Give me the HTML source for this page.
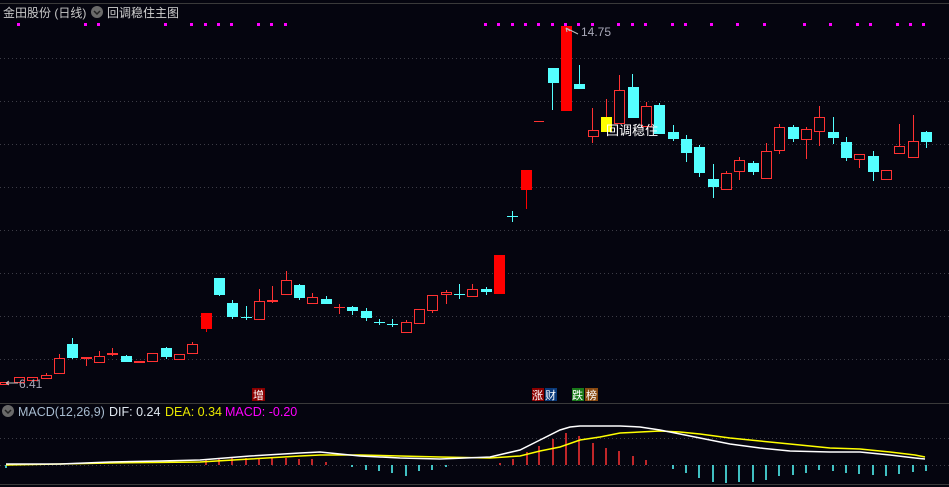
<!DOCTYPE html>
<html><head><meta charset="utf-8"><style>
html,body{margin:0;padding:0;background:#05050f;}
svg{display:block;font-family:"Liberation Sans","Noto Sans CJK SC",sans-serif;}
</style></head><body>
<svg width="949" height="487" viewBox="0 0 949 487" xmlns="http://www.w3.org/2000/svg">
<rect width="949" height="487" fill="#05050f"/>
<line x1="0" y1="3.5" x2="949" y2="3.5" stroke="#3a3a3a"/>
<g stroke="#3c3c46" stroke-dasharray="1 3">
<line x1="0" y1="58.5" x2="949" y2="58.5"/><line x1="0" y1="101.5" x2="949" y2="101.5"/>
<line x1="0" y1="144.5" x2="949" y2="144.5"/><line x1="0" y1="187.5" x2="949" y2="187.5"/>
<line x1="0" y1="230.5" x2="949" y2="230.5"/><line x1="0" y1="273.5" x2="949" y2="273.5"/>
<line x1="0" y1="316.5" x2="949" y2="316.5"/><line x1="0" y1="359.5" x2="949" y2="359.5"/>
<line x1="0" y1="438.5" x2="949" y2="438.5"/><line x1="0" y1="465.5" x2="949" y2="465.5"/>
</g>
<line x1="0" y1="403.5" x2="949" y2="403.5" stroke="#3a3a3a"/>
<line x1="0" y1="484.5" x2="949" y2="484.5" stroke="#3a3a3a"/>
<text x="3" y="17" fill="#c8c8c8" font-size="12">金田股份 (日线)</text>
<circle cx="97" cy="12" r="6" fill="#6a6a6a"/><path d="M94 11l3 3 3-3" stroke="#222" stroke-width="1.5" fill="none"/>
<text x="107" y="17" fill="#d0d0d0" font-size="12">回调稳住主图</text>
<g fill="#ff00ff">
<rect x="17" y="23" width="3" height="3"/><rect x="84" y="23" width="3" height="3"/><rect x="97" y="23" width="3" height="3"/><rect x="164" y="23" width="3" height="3"/><rect x="190" y="23" width="3" height="3"/><rect x="204" y="23" width="3" height="3"/><rect x="217" y="23" width="3" height="3"/><rect x="230" y="23" width="3" height="3"/><rect x="257" y="23" width="3" height="3"/><rect x="270" y="23" width="3" height="3"/><rect x="284" y="23" width="3" height="3"/>
<rect x="484" y="23" width="3" height="3"/><rect x="497" y="23" width="3" height="3"/><rect x="511" y="23" width="3" height="3"/><rect x="524" y="23" width="3" height="3"/><rect x="537" y="23" width="3" height="3"/><rect x="551" y="23" width="3" height="3"/><rect x="564" y="23" width="3" height="3"/><rect x="577" y="23" width="3" height="3"/><rect x="591" y="23" width="3" height="3"/><rect x="617" y="23" width="3" height="3"/><rect x="631" y="23" width="3" height="3"/><rect x="644" y="23" width="3" height="3"/><rect x="671" y="23" width="3" height="3"/><rect x="684" y="23" width="3" height="3"/>
<rect x="710" y="23" width="3" height="3"/><rect x="736" y="23" width="3" height="3"/><rect x="763" y="23" width="3" height="3"/><rect x="803" y="23" width="3" height="3"/><rect x="829" y="23" width="3" height="3"/><rect x="856" y="23" width="3" height="3"/><rect x="869" y="23" width="3" height="3"/><rect x="896" y="23" width="3" height="3"/><rect x="909" y="23" width="3" height="3"/><rect x="922" y="23" width="3" height="3"/>
</g>
<g stroke-width="1">
<line x1="4.5" y1="382" x2="4.5" y2="384" stroke="#ff3232"/><rect x="0.5" y="382.5" width="8" height="2" fill="#05050f" stroke="#ff3232"/>
<rect x="14.5" y="377.5" width="10" height="5" fill="#05050f" stroke="#ff3232"/>
<rect x="27.5" y="377.5" width="10" height="3" fill="#05050f" stroke="#ff3232"/>
<line x1="46.5" y1="373" x2="46.5" y2="379" stroke="#ff3232"/><rect x="41.5" y="375.5" width="10" height="3" fill="#05050f" stroke="#ff3232"/>
<line x1="59.5" y1="354" x2="59.5" y2="373" stroke="#ff3232"/><rect x="54.5" y="358.5" width="10" height="15" fill="#05050f" stroke="#ff3232"/>
<line x1="72.5" y1="338" x2="72.5" y2="359" stroke="#54ffff"/><rect x="67" y="344" width="11" height="14" fill="#54ffff"/>
<line x1="86.5" y1="357" x2="86.5" y2="366" stroke="#ff3232"/><rect x="81" y="357" width="11" height="2" fill="#ff3232"/>
<line x1="99.5" y1="351" x2="99.5" y2="363" stroke="#ff3232"/><rect x="94.5" y="356.5" width="10" height="6" fill="#05050f" stroke="#ff3232"/>
<line x1="112.5" y1="348" x2="112.5" y2="356" stroke="#ff3232"/><rect x="107" y="353" width="11" height="2" fill="#ff3232"/>
<line x1="126.5" y1="355" x2="126.5" y2="362" stroke="#54ffff"/><rect x="121" y="356" width="11" height="6" fill="#54ffff"/>
<rect x="134" y="361" width="11" height="2" fill="#ff3232"/>
<rect x="147.5" y="353.5" width="10" height="8" fill="#05050f" stroke="#ff3232"/>
<line x1="166.5" y1="347" x2="166.5" y2="359" stroke="#54ffff"/><rect x="161" y="348" width="11" height="9" fill="#54ffff"/>
<rect x="174.5" y="354.5" width="10" height="5" fill="#05050f" stroke="#ff3232"/>
<line x1="192.5" y1="342" x2="192.5" y2="354" stroke="#ff3232"/><rect x="187.5" y="344.5" width="10" height="9" fill="#05050f" stroke="#ff3232"/>
<line x1="206.5" y1="313" x2="206.5" y2="332" stroke="#ff0000"/><rect x="201" y="313" width="11" height="16" fill="#ff0000"/>
<line x1="219.5" y1="278" x2="219.5" y2="296" stroke="#54ffff"/><rect x="214" y="278" width="11" height="17" fill="#54ffff"/>
<line x1="232.5" y1="300" x2="232.5" y2="319" stroke="#54ffff"/><rect x="227" y="303" width="11" height="14" fill="#54ffff"/>
<line x1="246.5" y1="306" x2="246.5" y2="320" stroke="#54ffff"/><rect x="241" y="317" width="11" height="1" fill="#54ffff"/>
<line x1="259.5" y1="289" x2="259.5" y2="319" stroke="#ff3232"/><rect x="254.5" y="301.5" width="10" height="18" fill="#05050f" stroke="#ff3232"/>
<line x1="272.5" y1="286" x2="272.5" y2="303" stroke="#ff3232"/><rect x="267" y="300" width="11" height="2" fill="#ff3232"/>
<line x1="286.5" y1="271" x2="286.5" y2="294" stroke="#ff3232"/><rect x="281.5" y="280.5" width="10" height="14" fill="#05050f" stroke="#ff3232"/>
<line x1="299.5" y1="284" x2="299.5" y2="300" stroke="#54ffff"/><rect x="294" y="285" width="11" height="13" fill="#54ffff"/>
<line x1="312.5" y1="293" x2="312.5" y2="304" stroke="#ff3232"/><rect x="307.5" y="297.5" width="10" height="6" fill="#05050f" stroke="#ff3232"/>
<line x1="326.5" y1="296" x2="326.5" y2="304" stroke="#54ffff"/><rect x="321" y="299" width="11" height="5" fill="#54ffff"/>
<line x1="339.5" y1="304" x2="339.5" y2="314" stroke="#ff3232"/><rect x="334" y="307" width="11" height="1" fill="#ff3232"/>
<line x1="352.5" y1="306" x2="352.5" y2="315" stroke="#54ffff"/><rect x="347" y="307" width="11" height="4" fill="#54ffff"/>
<line x1="366.5" y1="308" x2="366.5" y2="321" stroke="#54ffff"/><rect x="361" y="311" width="11" height="7" fill="#54ffff"/>
<line x1="379.5" y1="319" x2="379.5" y2="325" stroke="#54ffff"/><rect x="374" y="322" width="11" height="1" fill="#54ffff"/>
<line x1="392.5" y1="319" x2="392.5" y2="327" stroke="#54ffff"/><rect x="387" y="324" width="11" height="1" fill="#54ffff"/>
<line x1="406.5" y1="320" x2="406.5" y2="332" stroke="#ff3232"/><rect x="401.5" y="322.5" width="10" height="10" fill="#05050f" stroke="#ff3232"/>
<rect x="414.5" y="309.5" width="10" height="14" fill="#05050f" stroke="#ff3232"/>
<line x1="432.5" y1="295" x2="432.5" y2="313" stroke="#ff3232"/><rect x="427.5" y="295.5" width="10" height="15" fill="#05050f" stroke="#ff3232"/>
<line x1="446.5" y1="290" x2="446.5" y2="304" stroke="#ff3232"/><rect x="441.5" y="292.5" width="10" height="2" fill="#05050f" stroke="#ff3232"/>
<line x1="459.5" y1="284" x2="459.5" y2="299" stroke="#54ffff"/><rect x="454" y="294" width="11" height="1" fill="#54ffff"/>
<line x1="472.5" y1="284" x2="472.5" y2="297" stroke="#ff3232"/><rect x="467.5" y="289.5" width="10" height="7" fill="#05050f" stroke="#ff3232"/>
<line x1="486.5" y1="287" x2="486.5" y2="295" stroke="#54ffff"/><rect x="481" y="289" width="11" height="3" fill="#54ffff"/>
<rect x="494" y="255" width="11" height="39" fill="#ff0000"/>
<line x1="512.5" y1="211" x2="512.5" y2="222" stroke="#54ffff"/><rect x="507" y="216" width="11" height="1" fill="#54ffff"/>
<line x1="526.5" y1="170" x2="526.5" y2="209" stroke="#ff0000"/><rect x="521" y="170" width="11" height="20" fill="#ff0000"/>
<rect x="534" y="121" width="10" height="1" fill="#ff3232"/>
<line x1="552.5" y1="68" x2="552.5" y2="110" stroke="#54ffff"/><rect x="548" y="68" width="11" height="15" fill="#54ffff"/>
<rect x="561" y="26" width="11" height="85" fill="#ff0000"/>
<line x1="579.5" y1="65" x2="579.5" y2="89" stroke="#54ffff"/><rect x="574" y="84" width="11" height="5" fill="#54ffff"/>
<line x1="592.5" y1="108" x2="592.5" y2="143" stroke="#ff3232"/><rect x="588.5" y="130.5" width="10" height="6" fill="#05050f" stroke="#ff3232"/>
<line x1="606.5" y1="99" x2="606.5" y2="132" stroke="#ff3232"/><rect x="601" y="117" width="11" height="15" fill="#ffff00"/>
<line x1="619.5" y1="75" x2="619.5" y2="124" stroke="#ff3232"/><rect x="614.5" y="90.5" width="10" height="33" fill="#05050f" stroke="#ff3232"/>
<line x1="632.5" y1="74" x2="632.5" y2="118" stroke="#54ffff"/><rect x="628" y="87" width="11" height="31" fill="#54ffff"/>
<line x1="646.5" y1="102" x2="646.5" y2="126" stroke="#ff3232"/><rect x="641.5" y="106.5" width="10" height="20" fill="#05050f" stroke="#ff3232"/>
<line x1="659.5" y1="103" x2="659.5" y2="134" stroke="#54ffff"/><rect x="654" y="105" width="11" height="29" fill="#54ffff"/>
<line x1="673.5" y1="125" x2="673.5" y2="141" stroke="#54ffff"/><rect x="668" y="132" width="11" height="7" fill="#54ffff"/>
<line x1="686.5" y1="135" x2="686.5" y2="162" stroke="#54ffff"/><rect x="681" y="139" width="11" height="14" fill="#54ffff"/>
<line x1="699.5" y1="145" x2="699.5" y2="177" stroke="#54ffff"/><rect x="694" y="147" width="11" height="26" fill="#54ffff"/>
<line x1="713.5" y1="164" x2="713.5" y2="198" stroke="#54ffff"/><rect x="708" y="179" width="11" height="8" fill="#54ffff"/>
<line x1="726.5" y1="171" x2="726.5" y2="189" stroke="#ff3232"/><rect x="721.5" y="173.5" width="10" height="16" fill="#05050f" stroke="#ff3232"/>
<line x1="739.5" y1="157" x2="739.5" y2="180" stroke="#ff3232"/><rect x="734.5" y="160.5" width="10" height="11" fill="#05050f" stroke="#ff3232"/>
<line x1="753.5" y1="161" x2="753.5" y2="175" stroke="#54ffff"/><rect x="748" y="163" width="11" height="9" fill="#54ffff"/>
<line x1="766.5" y1="143" x2="766.5" y2="178" stroke="#ff3232"/><rect x="761.5" y="151.5" width="10" height="27" fill="#05050f" stroke="#ff3232"/>
<line x1="779.5" y1="124" x2="779.5" y2="154" stroke="#ff3232"/><rect x="774.5" y="127.5" width="10" height="23" fill="#05050f" stroke="#ff3232"/>
<line x1="793.5" y1="125" x2="793.5" y2="142" stroke="#54ffff"/><rect x="788" y="127" width="11" height="12" fill="#54ffff"/>
<line x1="806.5" y1="127" x2="806.5" y2="159" stroke="#ff3232"/><rect x="801.5" y="129.5" width="10" height="10" fill="#05050f" stroke="#ff3232"/>
<line x1="819.5" y1="106" x2="819.5" y2="146" stroke="#ff3232"/><rect x="814.5" y="117.5" width="10" height="14" fill="#05050f" stroke="#ff3232"/>
<line x1="833.5" y1="117" x2="833.5" y2="144" stroke="#54ffff"/><rect x="828" y="132" width="11" height="6" fill="#54ffff"/>
<line x1="846.5" y1="137" x2="846.5" y2="161" stroke="#54ffff"/><rect x="841" y="142" width="11" height="16" fill="#54ffff"/>
<line x1="859.5" y1="154" x2="859.5" y2="168" stroke="#ff3232"/><rect x="854.5" y="154.5" width="10" height="5" fill="#05050f" stroke="#ff3232"/>
<line x1="873.5" y1="151" x2="873.5" y2="181" stroke="#54ffff"/><rect x="868" y="156" width="11" height="16" fill="#54ffff"/>
<rect x="881.5" y="170.5" width="10" height="9" fill="#05050f" stroke="#ff3232"/>
<line x1="899.5" y1="124" x2="899.5" y2="153" stroke="#ff3232"/><rect x="894.5" y="146.5" width="10" height="7" fill="#05050f" stroke="#ff3232"/>
<line x1="913.5" y1="115" x2="913.5" y2="157" stroke="#ff3232"/><rect x="908.5" y="141.5" width="10" height="16" fill="#05050f" stroke="#ff3232"/>
<line x1="926.5" y1="131" x2="926.5" y2="148" stroke="#54ffff"/><rect x="921" y="132" width="11" height="10" fill="#54ffff"/>
</g>
<text x="581" y="36" fill="#a8a8b8" font-size="12">14.75</text>
<path d="M566 28l4 3M566 28l1 4M566 28l12 6" stroke="#c0c0c0" fill="none"/>
<text x="19" y="388" fill="#a8a8b8" font-size="12">6.41</text>
<path d="M6 383h12M6 383l3-2M6 383l3 2" stroke="#c0c0c0" fill="none"/>
<text x="606" y="135" fill="#ffffff" font-size="13">回调稳住</text>
<rect x="252" y="388" width="13" height="13" fill="#8b0000"/><text x="253" y="399" fill="#fff" font-size="11">增</text>
<rect x="532" y="388" width="12" height="13" fill="#8b0000"/><text x="532" y="399" fill="#fff" font-size="11">涨</text>
<rect x="545" y="388" width="12" height="13" fill="#0a3a7a"/><text x="545" y="399" fill="#fff" font-size="11">财</text>
<rect x="572" y="388" width="12" height="13" fill="#1a7a1a"/><text x="572" y="399" fill="#fff" font-size="11">跌</text>
<rect x="585" y="388" width="13" height="13" fill="#8a4a10"/><text x="586" y="399" fill="#fff" font-size="11">榜</text>
<circle cx="8" cy="411" r="6" fill="#6a6a6a"/><path d="M5 410l3 3 3-3" stroke="#222" stroke-width="1.5" fill="none"/>
<text y="416" font-size="12.5"><tspan x="18" fill="#a8bcd0">MACD(12,26,9)</tspan><tspan x="109" fill="#e0e8f0">DIF: 0.24</tspan><tspan x="165" fill="#e8e800">DEA: 0.34</tspan><tspan x="225" fill="#ff00ff">MACD: -0.20</tspan></text>
<g stroke-width="1.5">
<g stroke="#ff3232">
<line x1="206" y1="465" x2="206" y2="459"/><line x1="219" y1="465" x2="219" y2="459"/><line x1="232" y1="465" x2="232" y2="458"/><line x1="246" y1="465" x2="246" y2="458"/><line x1="259" y1="465" x2="259" y2="459"/><line x1="272" y1="465" x2="272" y2="458"/><line x1="286" y1="465" x2="286" y2="458"/><line x1="299" y1="465" x2="299" y2="459"/><line x1="312" y1="465" x2="312" y2="459"/><line x1="326" y1="465" x2="326" y2="462"/>
<line x1="500" y1="465" x2="500" y2="463"/><line x1="513" y1="465" x2="513" y2="459"/><line x1="527" y1="465" x2="527" y2="452"/><line x1="539" y1="465" x2="539" y2="446"/><line x1="553" y1="465" x2="553" y2="439"/><line x1="566" y1="465" x2="566" y2="433"/><line x1="579" y1="465" x2="579" y2="436"/><line x1="593" y1="465" x2="593" y2="443"/><line x1="606" y1="465" x2="606" y2="448"/><line x1="619" y1="465" x2="619" y2="451"/><line x1="633" y1="465" x2="633" y2="456"/><line x1="646" y1="465" x2="646" y2="460"/>
</g>
<g stroke="#54ffff">
<line x1="6" y1="465" x2="6" y2="468"/><line x1="352" y1="465" x2="352" y2="467"/><line x1="366" y1="465" x2="366" y2="470"/><line x1="379" y1="465" x2="379" y2="471"/><line x1="392" y1="465" x2="392" y2="473"/><line x1="406" y1="465" x2="406" y2="476"/><line x1="419" y1="465" x2="419" y2="471"/><line x1="432" y1="465" x2="432" y2="470"/><line x1="446" y1="465" x2="446" y2="467"/>
<line x1="673" y1="465" x2="673" y2="469"/><line x1="686" y1="465" x2="686" y2="473"/><line x1="699" y1="465" x2="699" y2="478"/><line x1="713" y1="465" x2="713" y2="482"/><line x1="726" y1="465" x2="726" y2="483"/><line x1="739" y1="465" x2="739" y2="482"/><line x1="753" y1="465" x2="753" y2="482"/><line x1="766" y1="465" x2="766" y2="480"/><line x1="779" y1="465" x2="779" y2="476"/><line x1="793" y1="465" x2="793" y2="475"/><line x1="806" y1="465" x2="806" y2="473"/><line x1="819" y1="465" x2="819" y2="470"/><line x1="833" y1="465" x2="833" y2="471"/><line x1="846" y1="465" x2="846" y2="473"/><line x1="859" y1="465" x2="859" y2="474"/><line x1="873" y1="465" x2="873" y2="475"/><line x1="886" y1="465" x2="886" y2="476"/><line x1="899" y1="465" x2="899" y2="474"/><line x1="913" y1="465" x2="913" y2="472"/><line x1="926" y1="465" x2="926" y2="471"/>
</g>
</g>
<polyline fill="none" stroke="#ffff00" stroke-width="1.5" points="6,465 60,464 110,463 200,462 250,459 300,456 320,455 360,455 400,456 440,457 490,458 520,456 540,451 560,447 580,440 600,437 620,433 640,432 660,431 680,432 700,434 730,438 760,441 790,444 830,448 860,449 890,452 915,455 925,457"/>
<polyline fill="none" stroke="#ffffff" stroke-width="1.5" points="6,464 60,464 110,462 160,461 200,460 250,456 300,453 320,452 360,456 400,458 440,459 490,457 520,450 540,440 560,430 570,427 580,426 600,426 620,426 640,427 660,430 680,434 700,438 730,444 760,448 790,451 830,452 860,452 890,455 915,458 925,459"/>
</svg>
</body></html>
